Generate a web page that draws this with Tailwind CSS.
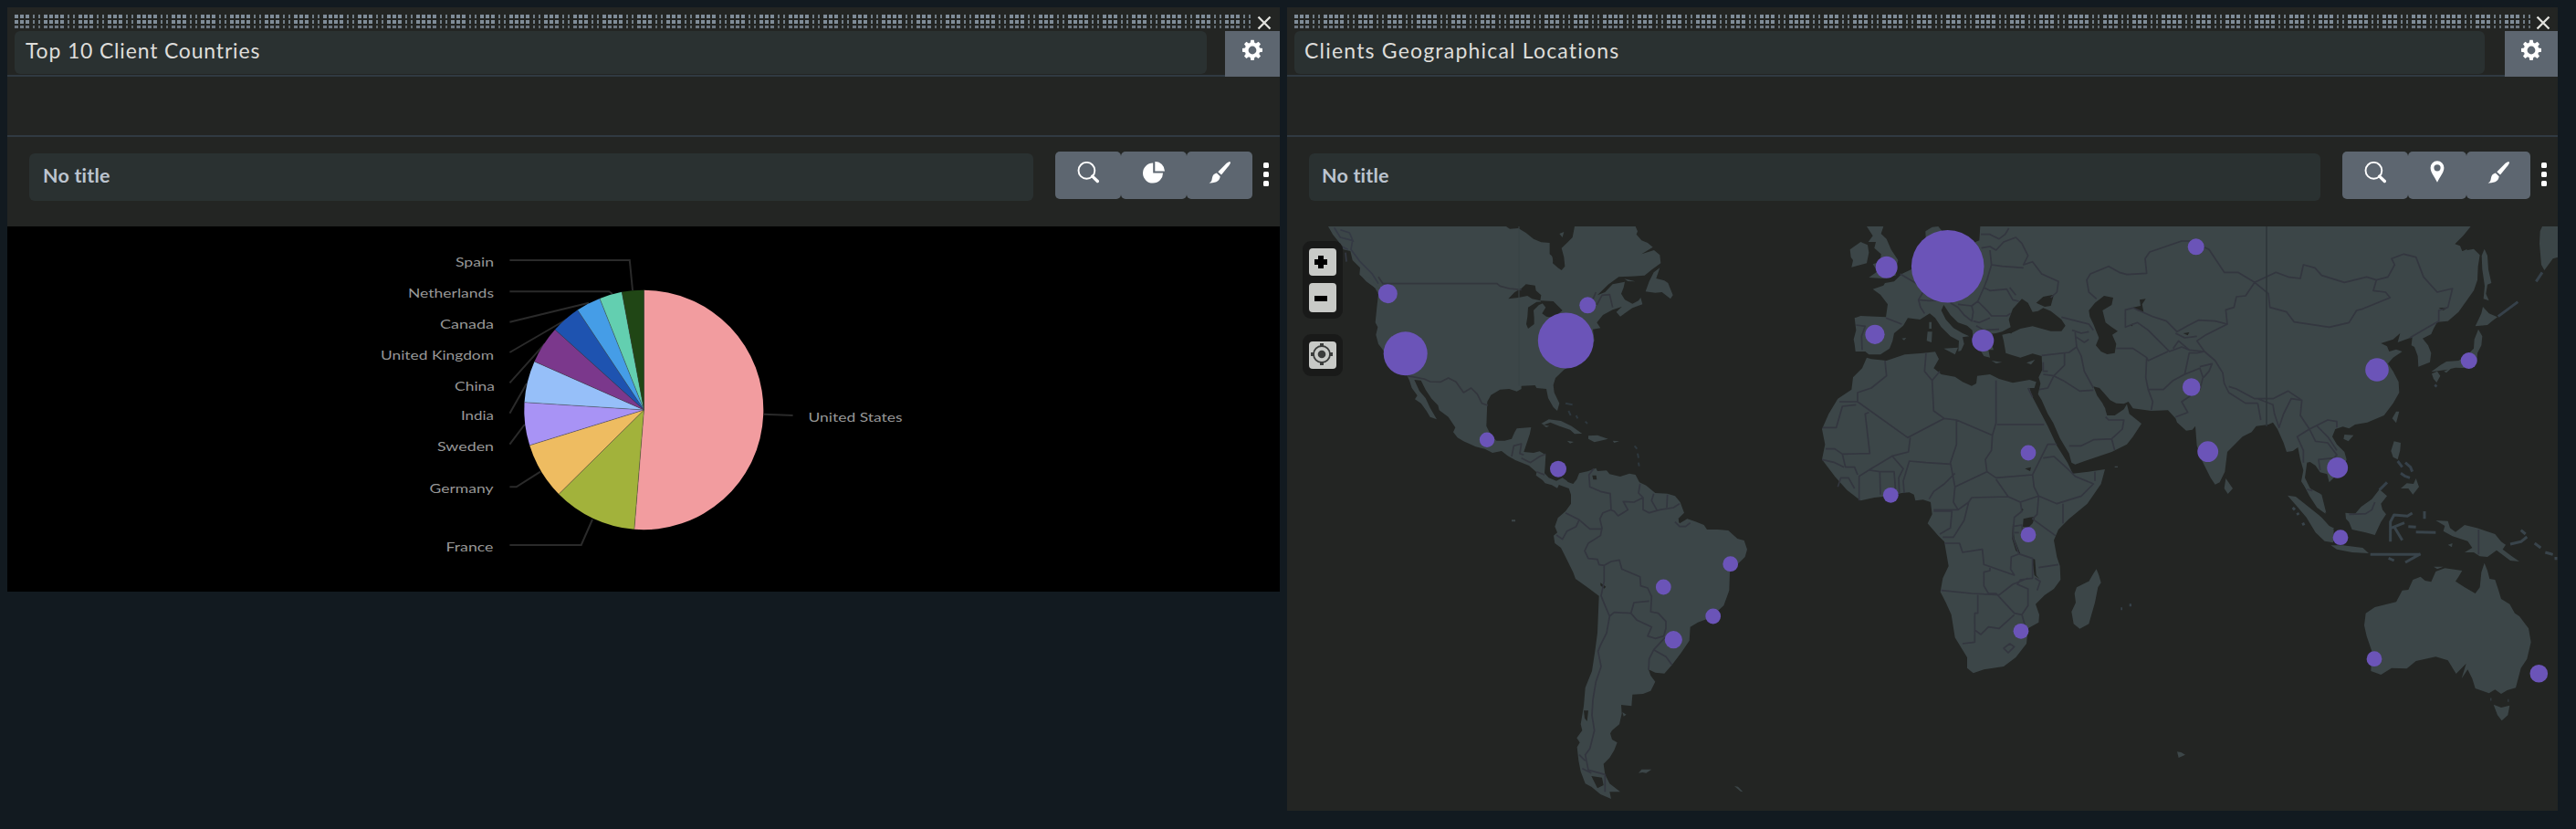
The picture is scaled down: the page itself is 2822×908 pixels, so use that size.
<!DOCTYPE html>
<html lang="en">
<head>
<meta charset="utf-8">
<title>Client dashboard</title>
<script src="https://cdn.jsdelivr.net/npm/@tailwindcss/browser@4"></script>
</head>
<body class="w-[2822px] h-[908px] overflow-hidden bg-[#121a20] font-['Lato','Open_Sans',sans-serif] flex items-start gap-2 pl-2 pt-2">

<svg class="absolute w-0 h-0" aria-hidden="true">
  <defs>
    <pattern id="grip" width="102" height="15" patternUnits="userSpaceOnUse" patternTransform="translate(32 0)">
      <g id="griprow" fill="#7f8c98">
        <path d="M0 0h4v4h-4zM6 0h4v4h-4zM12 0h4v4h-4zM18 0h4v4h-4zM38 0h4v4h-4zM44 0h4v4h-4zM50 0h4v4h-4zM70 0h4v4h-4zM76 0h4v4h-4zM82 0h4v4h-4z"/>
        <path d="M26 0h2v4h-2zM32 0h2v4h-2zM58 0h2v4h-2zM64 0h2v4h-2zM90 0h2v4h-2zM96 0h2v4h-2z" opacity=".85"/>
      </g>
      <use href="#griprow" y="6"/>
      <use href="#griprow" y="12" opacity=".8"/>
    </pattern>
    <symbol id="gear" viewBox="0 0 24 24">
      <path fill="#fff" fill-rule="evenodd" d="M10.3.8h3.4l.6 3 1.7.7 2.6-1.7 2.4 2.4-1.7 2.6.7 1.7 3 .6v3.6l-3 .6-.7 1.7 1.7 2.6-2.4 2.4-2.6-1.7-1.7.7-.6 3h-3.4l-.6-3-1.7-.7-2.6 1.7L3 18.6 4.700 16l-.7-1.700-3-.6v-3.600l3-.6.7-1.700L3 5.200l2.400-2.400L8 4.500l1.700-.7zM12 7.600a4.400 4.400 0 1 0 0 8.800 4.400 4.400 0 0 0 0-8.800z"/>
    </symbol>
    <symbol id="search" viewBox="0 0 24 24">
      <circle cx="10.400" cy="9.800" r="8.900" fill="none" stroke="#fff" stroke-width="1.900"/>
      <path d="M16.700 16.100 22.300 21.500" stroke="#fff" stroke-width="3.400" stroke-linecap="round"/>
    </symbol>
    <symbol id="pie" viewBox="0 0 24 24">
      <path fill="#fff" d="M11.200 1.600V12.400H22A11 11 0 1 1 11.200 1.600z"/>
      <path fill="#fff" d="M13.300 0A10.600 10.600 0 0 1 24 10.500H13.300z"/>
    </symbol>
    <symbol id="pin" viewBox="0 0 24 24">
      <path fill="#fff" fill-rule="evenodd" d="M12 .2a7.400 7.400 0 0 1 7.400 7.500c0 5.300-4.400 9.500-7.400 16.100C9 17.200 4.600 13 4.600 7.700A7.400 7.400 0 0 1 12 .2zM12 4.200a3.600 3.600 0 1 0 0 7.200 3.600 3.600 0 0 0 0-7.200z"/>
    </symbol>
    <symbol id="brush" viewBox="0 0 24 24">
      <path fill="#fff" d="M23.800.5c.5.800-.3 2.300-1.400 3.800L14 14.500l-3.700-3.300L19.700 1.800C21.300.5 23.100-.3 23.800.5z"/>
      <path fill="#fff" d="M8.900 12.500 12.700 16.200C12.300 20 9.600 23.600.6 23.400 4.200 21.600 3.200 19.800 4.300 16.400 5.200 14 7 12.900 8.900 12.500z"/>
    </symbol>
  </defs>
</svg>

<!-- Top 10 client countries -->
<section class="w-[1394px] h-[640px] bg-[#232523] flex flex-col">
  <div class="h-[26px] shrink-0 pl-2 pt-2 flex">
    <svg class="w-[1354px] h-[15px]"><rect width="1354" height="15" fill="url(#grip)"/></svg>
    <svg class="w-4 h-4 ml-[7px] mt-[1px]" viewBox="0 0 16 16"><path d="M1.500 1.500 14.500 14.500M14.500 1.500 1.500 14.500" stroke="#e2e2de" stroke-width="2.300"/></svg>
  </div>
  <div class="h-[50px] shrink-0 pl-2 flex justify-between bg-[linear-gradient(to_top,#303a42_2px,transparent_2px)]">
    <div class="w-[1306px] h-[47px] rounded-md bg-[#2a3131] pl-3 pt-[5px]"><h2 class="text-[23px] leading-[32px] tracking-[0.82px] text-[#deddda] whitespace-nowrap">Top 10 Client Countries</h2></div>
    <button class="w-[60px] h-[50px] bg-[#5d6670] flex justify-center pt-[9px]"><svg class="w-6 h-6"><use href="#gear"/></svg></button>
  </div>
  <div class="h-[66px] shrink-0 border-b-2 border-[#303a42]"></div>
  <div class="h-[98px] shrink-0 pl-6 flex">
    <div class="w-[1100px] h-[52px] mt-[18px] rounded-md bg-[#2a3131] pl-[15px] pt-[8px]"><p class="font-bold text-[21.500px] leading-[32px] tracking-[0.2px] text-[#bcc4cf] whitespace-nowrap">No title</p></div>
    <div class="ml-6 mt-4 h-[52px] flex">
      <button class="w-[72px] h-[52px] rounded-[5px] bg-[#5d6670] flex justify-center pt-[11px]"><svg class="w-6 h-6"><use href="#search"/></svg></button>
      <button class="w-[72px] h-[52px] rounded-[5px] bg-[#5d6670] flex justify-center pt-[11px]"><svg class="w-6 h-6"><use href="#pie"/></svg></button>
      <button class="w-[72px] h-[52px] rounded-[5px] bg-[#5d6670] flex justify-center pt-[11px]"><svg class="w-6 h-6"><use href="#brush"/></svg></button>
    </div>
    <div class="ml-3 mt-7 flex flex-col gap-1"><i class="size-[6px] rounded-[1.500px] bg-white"></i><i class="size-[6px] rounded-[1.500px] bg-white"></i><i class="size-[6px] rounded-[1.500px] bg-white"></i></div>
  </div>
  <svg class="w-[1394px] h-[400px] shrink-0 bg-black" viewBox="8 248 1394 400">
    <g fill="none" stroke="#2a2a2a" stroke-width="2">
      <path d="M558.400 285H689.800L693 318M558.400 319.300H667.300L671 322M558.400 352.700 645 331.700M558.400 386 620.400 350M558.400 419.300 596.700 376.700M558.400 452.700 577 420M558.400 486.700 574.700 465M558.400 533.300H565.700L592 516.700M558.400 597H636.700L649 569M837 453.700 868.600 455"/>
    </g>
    <g>
      <path fill="#f29c9f" d="M705.500 449V317.800A131.200 131.200 0 1 1 694.900 579.800z"/>
      <path fill="#a2b23b" d="M705.500 449 694.900 579.800A131.200 131.200 0 0 1 612.200 541.200z"/>
      <path fill="#eebc61" d="M705.500 449 612.200 541.200A131.200 131.200 0 0 1 580.200 487.800z"/>
      <path fill="#a893f5" d="M705.500 449 580.200 487.800A131.200 131.200 0 0 1 574.500 440.700z"/>
      <path fill="#96bff9" d="M705.500 449 574.500 440.700A131.200 131.200 0 0 1 585.500 396z"/>
      <path fill="#7b388c" d="M705.500 449 585.500 396A131.200 131.200 0 0 1 608 361z"/>
      <path fill="#1e53b0" d="M705.500 449 608 361A131.200 131.200 0 0 1 632.700 339.500z"/>
      <path fill="#459de7" d="M705.500 449 632.700 339.500A131.200 131.200 0 0 1 657 327z"/>
      <path fill="#63cfb0" d="M705.500 449 657 327A131.200 131.200 0 0 1 681.200 319.800z"/>
      <path fill="#204615" d="M705.500 449 681.200 319.800A131.200 131.200 0 0 1 705.500 317.800z"/>
    </g>
    <path fill="none" stroke="#444" stroke-opacity=".45" d="M705.500 449 694.900 579.800M705.500 449 612.200 541.200M705.500 449 580.200 487.800M705.500 449 574.500 440.700M705.500 449 585.500 396M705.500 449 608 361M705.500 449 632.700 339.500M705.500 449 657 327M705.500 449 681.200 319.800M705.500 449V317.800"/>
    <g fill="#979797" font-size="14" font-family="Lato, sans-serif">
      <text x="499" y="292" textLength="42" lengthAdjust="spacingAndGlyphs">Spain</text>
      <text x="447" y="326" textLength="94" lengthAdjust="spacingAndGlyphs">Netherlands</text>
      <text x="482" y="360" textLength="59" lengthAdjust="spacingAndGlyphs">Canada</text>
      <text x="417" y="394" textLength="124" lengthAdjust="spacingAndGlyphs">United Kingdom</text>
      <text x="498" y="428" textLength="44" lengthAdjust="spacingAndGlyphs">China</text>
      <text x="505" y="460" textLength="36" lengthAdjust="spacingAndGlyphs">India</text>
      <text x="479" y="494" textLength="62" lengthAdjust="spacingAndGlyphs">Sweden</text>
      <text x="470.500" y="540" textLength="70" lengthAdjust="spacingAndGlyphs">Germany</text>
      <text x="488.500" y="604" textLength="52" lengthAdjust="spacingAndGlyphs">France</text>
      <text x="885.500" y="462" textLength="103" lengthAdjust="spacingAndGlyphs">United States</text>
    </g>
  </svg>
</section>

<!-- Client locations -->
<section class="w-[1392px] h-[880px] bg-[#232523] flex flex-col">
  <div class="h-[26px] shrink-0 pl-2 pt-2 flex">
    <svg class="w-[1354px] h-[15px]"><rect width="1354" height="15" fill="url(#grip)"/></svg>
    <svg class="w-4 h-4 ml-[6px] mt-[1px]" viewBox="0 0 16 16"><path d="M1.500 1.500 14.500 14.500M14.500 1.500 1.500 14.500" stroke="#e2e2de" stroke-width="2.300"/></svg>
  </div>
  <div class="h-[50px] shrink-0 pl-2 flex justify-between bg-[linear-gradient(to_top,#303a42_2px,transparent_2px)]">
    <div class="w-[1304px] h-[47px] rounded-md bg-[#2a3131] pl-[11px] pt-[5px]"><h2 class="text-[23px] leading-[32px] tracking-[1.2px] text-[#deddda] whitespace-nowrap">Clients Geographical Locations</h2></div>
    <button class="w-[58px] h-[50px] bg-[#5d6670] flex justify-center pt-[9px]"><svg class="w-6 h-6"><use href="#gear"/></svg></button>
  </div>
  <div class="h-[66px] shrink-0 border-b-2 border-[#303a42]"></div>
  <div class="h-[98px] shrink-0 pl-6 flex">
    <div class="w-[1108px] h-[52px] mt-[18px] rounded-md bg-[#2a3131] pl-[14px] pt-[8px]"><p class="font-bold text-[21.500px] leading-[32px] tracking-[0.2px] text-[#bcc4cf] whitespace-nowrap">No title</p></div>
    <div class="ml-6 mt-4 h-[52px] flex">
      <button class="w-[72px] h-[52px] rounded-[5px] bg-[#5d6670] flex justify-center pt-[11px]"><svg class="w-6 h-6"><use href="#search"/></svg></button>
      <button class="w-[64px] h-[52px] rounded-[5px] bg-[#5d6670] flex justify-center pt-[10px]"><svg class="w-6 h-6"><use href="#pin"/></svg></button>
      <button class="w-[70px] h-[52px] rounded-[5px] bg-[#5d6670] flex justify-center pt-[11px]"><svg class="w-6 h-6"><use href="#brush"/></svg></button>
    </div>
    <div class="ml-3 mt-7 flex flex-col gap-1"><i class="size-[6px] rounded-[1.500px] bg-white"></i><i class="size-[6px] rounded-[1.500px] bg-white"></i><i class="size-[6px] rounded-[1.500px] bg-white"></i></div>
  </div>
  <div class="relative w-[1392px] h-[640px] shrink-0 overflow-hidden">
    <svg class="block w-[1392px] h-[640px]" viewBox="1410 248 1392 640">
      <!-- North and Central America -->
      <g transform="translate(1400 240) scale(.33333)" stroke-linejoin="round">
        <g fill="#3c4648">
          <path d="M165 24H750L762 32 790 30 815 45 840 65 865 76 893 78 893 115 905 125 903 145 920 160 932 168 943 155 940 125 932 95 950 78 968 60 975 24H1175L1182 40 1178 50 1195 70 1215 78 1232 92 1195 115 1236 102 1255 118 1258 145 1230 165 1205 185 1160 188 1120 190 1085 215 1050 250 1075 240 1100 214 1140 206 1136 225 1128 245 1140 265 1165 278 1185 268 1192 258 1198 280 1165 292 1125 320 1112 305 1130 288 1100 298 1068 315 1048 340 1060 358 1035 362 1040 400 1010 440 980 470 940 495 912 522 905 545 908 570 925 605 918 630 905 618 888 588 882 558 850 555 845 546 800 548 800 558 785 566 760 558 730 560 700 578 688 600 685 680 700 710 718 728 745 728 768 722 778 700 785 688 832 684 828 705 818 735 808 765 840 768 860 763 880 775 878 810 876 835 890 850 915 860 935 850 950 860 960 878 950 870 925 870 918 884 900 874 878 868 870 858 848 842 850 832 825 810 780 792 755 778 735 762 705 768 680 755 650 748 610 730 590 718 576 700 583 685 560 650 530 628 526 612 505 590 485 560 470 530 448 528 465 565 485 588 500 620 522 658 500 650 488 630 470 605 450 592 458 580 440 555 432 530 425 515 385 490 365 470 345 430 330 410 322 380 328 355 320 340 325 290 330 245 318 225 290 200 268 182 270 160 245 135 238 105 215 100 200 75 180 50z"/>
          <path d="M1255 160 1243 195 1270 202 1282 210 1298 250 1290 262 1262 240 1240 242 1208 238 1220 205 1235 175zM865 672 890 658 930 663 965 680 1000 705 975 706 960 692 925 680 895 668 875 676zM1020 712 1050 710 1085 722 1060 728 1040 733 1020 722zM950 728 972 732 960 737zM1100 728 1122 730 1105 735zM270 182 300 192 335 228 318 225 290 205zM1138 196 1175 205 1150 204zM925 48 940 42 935 60zM870 676 892 680 882 684z"/>
          <path d="M945 605 968 610M955 630 962 645M980 645 985 655M1010 665 1017 672M1172 745 1180 755M1182 770 1185 785M1185 800 1187 812" stroke="#2e383e" stroke-width="6" fill="none"/>
        </g>
        <path fill="#232523" d="M757 262 778 240 800 228 815 214 845 218 848 235 865 250 862 268 835 262 820 252 790 258zM822 290 850 272 885 270 858 282 840 300 842 325 842 345 822 360 816 345 820 320zM862 268 905 270 935 300 905 325 882 320 868 310 880 290zM885 355 940 335 905 358zM945 325 985 310 960 318zM900 118 918 128 905 138z"/>
        <path fill="none" stroke="#33363d" stroke-width="5" d="M330 190 345 212H720L730 220 760 228 800 232M425 515 480 525 500 534 535 535 560 522 585 535 610 570 635 555 655 575 670 605 690 612M1048 282 1065 250 1090 248 1100 290M768 780 775 745 800 738 795 770 808 775M800 785 830 800 860 780 880 772M1045 240 1030 275 1000 300M850 830 876 840"/>
        <path fill="none" stroke="#394245" stroke-width="3" d="M792 24V548"/>
        <path fill="none" stroke="#343944" stroke-width="5" d="M185 28 205 60 245 70 240 100 270 140 310 180 330 212M205 35 235 45 248 75M222 110 225 140M210 90 230 100"/>
      </g>
      <!-- South America -->
      <g transform="translate(1640 480) scale(.33333)" stroke-linejoin="round">
        <path fill="#3c4648" d="M195 150 215 135 235 145 250 150 262 135 270 115 300 108 325 98 330 108 360 106 370 118 405 126 435 116 455 120 468 145 490 155 520 180 560 182 585 190 602 210 615 245 598 262 600 280 625 265 650 273 680 285 690 300 725 300 760 303 790 330 812 336 822 365 815 390 790 415 765 440 763 500 745 550 700 590 660 605 635 620 632 665 605 705 575 745 550 773 520 770 498 760 505 780 520 800 505 830 480 840 445 842 442 880 408 876 410 905 402 940 378 960 372 970 378 990 395 1000 385 1025 370 1050 350 1070 355 1105 370 1135 405 1162 370 1162 375 1185 340 1170 310 1145 290 1135 275 1095 268 1060 263 1015 272 1000 262 985 280 960 275 940 285 880 290 820 312 765 322 700 330 640 335 518 300 492 258 462 250 440 230 400 210 360 190 345 186 320 198 310 190 290 200 262 225 240 243 215 243 185 236 165z"/>
        <path fill="#3c4648" d="M465 1100 475 1088 508 1088 490 1100 478 1098zM780 1143 792 1145 808 1162 800 1160zM412 900 425 908 416 914zM48 268H60V274H48z"/>
        <path fill="#232523" d="M313 122 326 122 328 136 316 136zM340 475 358 488 352 494 340 484zM285 895 300 895 296 930 288 920zM596 262 606 270 598 278zM310 1110 345 1115 350 1140 330 1150z"/>
        <path fill="none" stroke="#33363f" stroke-width="5" d="M318 100 302 120 305 160 340 175 372 182 375 235 348 245 338 265 345 295 340 320 300 345 288 370 300 395 330 398 335 415 352 418M372 235 385 240 398 255 430 235 415 208 450 210 480 195 465 180 470 150M480 195 480 235 500 245 535 235 580 228 600 215M515 182 508 205 525 235M560 185 558 228M225 245 270 268 305 298 345 298M270 268 260 290 230 305 215 332 195 318M352 418 375 405 402 400 410 430 470 455 472 485 495 492 508 520 505 570 530 575 555 602 555 625 548 650 520 658 495 650 508 620 460 598 440 575 450 540 500 535M352 418 352 470 342 518 355 550 370 585 385 572 440 575M370 585 360 640 340 680 332 700 342 750 325 800 315 860 312 910 320 960 305 1020 290 1040 300 1090 355 1105M552 655 515 695 500 725 498 762M515 695 555 718 575 745M560 650 570 640M585 275 600 290 620 290 635 278M355 1105V1162M270 1040 290 1060M280 1085 310 1100"/>
      </g>
      <!-- Europe, Africa and Asia -->
      <g transform="translate(1960 240) scale(.33333)" stroke-linejoin="round">
        <g fill="#3c4648">
          <path d="M628 24H2240L2215 55 2188 82 2205 88 2212 105 2250 98 2270 118 2264 155 2262 200 2250 235 2225 270 2200 305 2165 335 2130 338 2118 360 2110 378 2082 392 2100 415 2110 440 2106 470 2068 485 2066 450 2055 420 2045 415 2048 388 2035 392 2000 405 2008 375 1985 395 1945 408 1965 418 1972 435 1995 428 2015 435 1985 455 1968 475 1985 500 2003 535 2005 570 1985 605 1955 645 1900 668 1860 675 1840 688 1820 682 1795 690 1785 715 1800 740 1825 765 1832 790 1822 820 1790 850 1775 865 1768 838 1745 832 1730 810 1712 798 1702 800 1695 850 1715 890 1750 905 1765 965 1740 950 1715 910 1683 862 1690 825 1680 790 1672 750 1655 762 1635 765 1625 735 1605 690 1590 668 1575 675 1535 680 1520 700 1490 715 1440 765 1432 830 1415 865 1400 872 1385 850 1355 790 1340 745 1335 680 1325 692 1305 695 1275 668 1270 655 1245 628 1190 630 1130 622 1115 600 1100 607 1075 605 1055 595 1038 575 1020 555 1000 550 1012 580 1030 605 1042 630 1035 612 1045 645 1070 645 1100 625 1110 608 1118 640 1158 672 1130 715 1110 740 1060 765 1000 785 940 806 928 800 920 770 890 720 868 670 850 640 830 595 818 575 826 540 820 520 832 495 830 450 800 442 760 455 735 448 712 440 705 400 700 380 735 372 760 360 800 352 860 368 895 368 908 350 895 330 860 302 835 292 818 302 800 305 785 275 765 262 735 295 722 330 728 355 700 370 680 375 655 378 662 400 672 430 655 430 660 455 640 450 625 425 605 400 602 365 585 350 555 340 530 315 508 282 500 300 515 330 540 358 570 375 592 385 570 388 575 410 565 432 556 435 558 400 530 385 500 355 480 325 462 310 430 330 390 325 375 350 345 375 340 400 330 425 300 445 262 445 250 435 218 435 215 410 212 395 220 365 215 325 235 318 318 322 324 280 300 248 275 230 310 218 315 210 345 205 370 180 402 165 420 130 450 90 448 40 470 26 490 24 520 60 600 80 625 70z"/>
          <path d="M255 24H310L302 48 320 65 335 100 358 135 352 160 350 185 310 195 262 192 290 172 275 148 300 140 302 115 280 95 285 75 260 75 275 55zM200 100 235 75 258 85 262 110 255 145 205 158 210 135 203 125zM455 370 470 370 468 405 452 400zM460 338H468V360H460zM508 425 555 422 545 445zM665 465 700 470 680 474zM780 472 808 462 795 478zM370 392 385 390 378 398z"/>
          <path d="M255 455 270 460 320 465 380 445 440 440 480 436 492 460 475 490 500 510 545 518 570 535 600 548 615 540 618 515 660 510 690 525 735 538 790 528 812 535 806 555 790 555 800 585 850 680 880 745 915 800 932 836 970 832 1038 822 1025 870 980 935 920 985 885 1020 870 1055 880 1110 890 1140 892 1185 870 1215 840 1235 810 1265 822 1300 820 1325 785 1345 780 1395 745 1440 705 1470 640 1480 605 1492 585 1475 585 1440 545 1375 533 1300 515 1260 497 1225 505 1180 524 1140 510 1060 490 1040 455 1000 470 970 465 930 440 922 415 925 410 905 395 898 370 900 330 910 280 915 235 925 190 890 150 845 108 790 118 740 108 690 130 640 160 590 205 560 210 520 240 490z"/>
          <path d="M1010 1150 1018 1170 1025 1195 1015 1210 1005 1260 985 1330 955 1346 935 1330 928 1290 942 1260 938 1230 945 1210 985 1190 1000 1165zM2280 288 2300 310 2328 322 2310 335 2295 348 2255 352 2268 325 2275 310zM2265 362 2278 385 2275 415 2262 440 2260 470 2235 490 2190 488 2160 495 2110 502 2140 480 2160 468 2200 465 2225 450 2250 425 2252 395zM2112 508 2130 500 2140 515 2128 537 2118 525zM2152 500 2178 488 2160 505zM2285 98 2295 120 2298 165 2308 210 2295 215 2290 245 2300 268 2282 262 2286 220 2278 165 2276 120zM2475 24H2527V125L2510 130 2482 168 2472 150 2466 80 2468 40zM1995 632 2005 632 1995 670 1982 655zM1825 708 1855 710 1838 730 1822 722zM1435 852 1458 885 1442 903 1430 885zM1988 730 2010 735 2008 760 2000 790 1985 782 1978 762zM2010 885 2030 868 2052 870 2060 852 2070 880 2050 905 2035 885zM2215 105 2228 98 2226 110zM1070 812H1080V816H1070z"/>
          <path d="M1965 865 1940 890M2000 795 2015 815M2025 800 2042 815 2048 830M2010 835 2025 845 2040 850M2330 320 2395 272M2455 205 2475 175M2128 545 2122 550M1090 1280H1095M1118 1268H1125" fill="none" stroke="#36414a" stroke-width="9"/>
        </g>
        <path fill="#232523" d="M812 275 835 255 870 248 860 285 840 288zM985 300 1005 275 1035 252 1065 258 1060 282 1030 300 1040 340 1060 355 1080 368 1062 380 1075 410 1070 440 1045 444 1025 435 1008 415 1018 390 1000 345 988 320zM1130 290 1155 285 1152 265 1172 262 1160 280 1165 305 1148 302zM770 985 790 980 808 978 800 1000 785 1015 768 1010zM735 1000 740 1050 760 1100 745 1090 733 1050zM798 1115 808 1118 812 1170 822 1182 806 1170zM765 950 770 955 758 968zM1120 350 1130 342 1128 352zM2135 292 2165 290 2150 300zM775 820 795 815 792 828zM710 372 735 370 730 376zM1295 375 1315 372 1310 382z"/>
        <g fill="none" stroke="#33363f" stroke-width="5">
          <path d="M630 50 660 50 690 65 710 50 722 30M632 95 660 90 680 102 705 75 745 60 765 80 785 120 770 150 800 140 830 180 885 205 880 240 860 258M660 102 665 150 700 155 770 160M665 150 650 200 640 225 660 235 715 230 735 265 755 270M725 225 745 250M640 225 620 270 655 305 665 318 715 318 728 310M555 280 600 285 620 270M555 290 575 315 600 335 605 305 600 285M605 335 625 340 660 325M615 350 640 365 690 362M530 275 555 290M440 240 425 265 432 290 445 310M425 265 460 268 520 265M318 325 370 345M220 348 250 352 238 385 240 430M365 180 390 195 425 215"/>
          <path d="M895 322 945 335 985 345 1000 365M930 365 960 375 985 370M940 372 945 420 920 438 830 448M945 420 960 450 970 500 1000 555M940 385 970 405 985 395M905 440 905 480 870 515 835 510M870 515 900 530 955 565 1000 562M870 515 850 555 822 560M835 470V500L850 500"/>
          <path d="M1010 262 985 240 978 200 990 180 1050 155 1085 175 1110 182 1175 178 1170 130 1185 108 1290 72 1320 72 1380 100 1430 175 1475 175 1530 208 1575 245 1580 290 1635 305 1660 338 1775 355 1840 340 1865 300 1885 295 1975 258 1960 240 1920 235 1930 200 1898 190 1825 208 1750 185 1728 160 1690 150 1680 195 1640 190 1600 175 1530 208 1500 252 1470 255 1462 290 1435 298 1440 345 1400 335 1345 332 1310 350 1275 370 1240 335 1195 320 1130 292 1105 298V355L1145 340 1180 365 1250 435 1290 420 1315 430M1930 200 1968 190 1990 150 1980 130 2020 115 2060 125 2085 190 2130 240 2180 228 2165 290 2135 300 2135 335 2095 358 2040 390"/>
          <path d="M1440 345 1370 380 1340 400 1365 435 1315 430 1280 400 1262 425M1340 385 1300 390 1270 375M1075 425 1130 425 1175 455 1180 465 1245 435M1175 455 1172 520 1180 560 1195 600 1190 628M1180 560 1230 560 1262 530 1300 510 1315 440 1340 440 1365 435 1400 465 1425 505 1430 540 1445 570 1500 605 1540 605M1445 550 1470 558 1530 590 1590 590 1640 565 1685 595 1680 645 1710 690 1770 660 1800 665 1800 685M1350 485 1390 475 1380 500 1362 520M1300 510 1350 490 1360 520 1350 560 1290 600 1310 635 1270 650M1540 605 1550 660M1540 590 1590 610 1595 640 1610 685 1625 640 1650 590 1685 595M1710 690 1670 715 1690 760 1690 800M1710 690 1730 730 1770 735 1800 775 1790 785 1740 790 1745 825M1735 680 1770 715 1800 760"/>
          <path d="M920 745 960 745 1000 725 1060 722 1095 690 1100 660 1050 660 1040 650M1060 722 1070 760M785 555 800 585"/>
        </g>
        <path fill="none" stroke="#2f363a" stroke-width="5" d="M1569 24V680"/>
        <path fill="none" stroke="#33363f" stroke-width="5" d="M450 440 445 500 470 530 475 630 510 655 390 718 225 600 225 570 270 555 320 515 315 465M495 500 470 530M110 685 155 685 175 615 220 610M225 600 165 600M262 635 250 640 265 770 175 772 150 755 120 755M510 655 550 660 668 710 680 670 680 530M683 675H838M668 710 665 760 645 790 650 830 545 880 530 800 550 740 550 660M398 718 392 765 340 778 270 820 230 845 230 925M175 772 185 815 215 815 225 840M108 790 150 800 180 815M160 880 170 850 195 850 215 885M265 825 298 830 300 905M300 830 345 830 350 895M340 780 375 820 360 850 362 900M378 900 375 860 395 795 450 800 530 805M545 835 510 870 475 895 460 920M545 880 540 930 555 955 475 955M555 955 590 930 575 990 540 1045 505 1045M475 960 535 960 530 1015 495 1035M590 930 600 915 720 912 760 930 765 960 740 980 735 1045 755 1100 730 1110 728 1150 740 1170 640 1135 635 1085 570 1095 560 1065 510 1065M650 830 680 850 800 840 830 780 850 740 880 740M800 840 805 880 820 910 760 930M720 912 680 855M820 910 880 935 960 910 1000 870 940 845 915 820 870 780 835 785M900 935V1000M1005 830 1005 860M820 910 815 970 800 985 875 1040M755 1100 800 1115 800 1180 760 1185 750 1200 785 1215 785 1270 765 1300 740 1295 680 1230 655 1230 640 1205 640 1160 660 1155 660 1140M820 1145 885 1135M500 1220 600 1230 690 1235 735 1200 785 1180M620 1235V1295H610V1390L570 1395M610 1350 630 1365 655 1340 690 1345 740 1300M765 1300 775 1335M705 1410 725 1395 740 1405 720 1425zM735 1010 765 1005 768 1035M740 1030 755 1030M808 1180 825 1190 815 1220"/>
      </g>
      <!-- South-east Asia and Oceania -->
      <g transform="translate(2380 500) scale(.33333)" stroke-linejoin="round">
        <g fill="#3c4648">
          <path d="M1025 350 1035 375 1042 402 1060 405 1070 435 1080 468 1108 485 1125 515 1140 525 1170 565 1178 610 1165 665 1145 695 1128 760 1100 768 1080 780 1060 766 1040 778 995 762 985 730 970 700 950 730 965 680 932 714 905 670 865 658 800 672 770 697 720 695 685 717 652 705 655 640 638 590 630 555 635 515 665 495 735 478 755 440 775 438 790 405 815 395 830 408 850 412 865 378 895 367 952 375 940 395 930 410 960 430 995 450 1010 430 1015 380zM1055 815 1080 825 1108 818 1102 850 1082 868 1068 850zM378 128 405 132 440 160 490 200 515 228 530 240 528 283 500 278 470 250 440 200 410 165zM425 80 440 98 485 122 503 188 475 168 450 130zM568 185 600 188 620 165 655 140 680 108 705 130 685 155 690 175 702 190 685 215 665 258 635 250 590 240 580 215 570 205zM520 292 560 292 625 300 645 318 590 315 540 305zM865 210 905 212 912 235 930 248 960 225 1000 235 1060 255 1080 280 1095 290 1085 305 1115 328 1140 345 1110 342 1065 308 1035 330 1010 328 990 315 960 315 985 300 970 278 920 262 890 245 895 228zM15 970 28 972 42 980 20 990zM858 362 890 362 870 370zM515 228 532 236 522 240zM905 290 920 285 918 298z"/>
          <path d="M788 186 772 196 728 192 716 215 716 280M718 235 762 218M728 230 755 275M650 322H815M710 334 728 342M765 348 815 320M828 180V205M800 248 865 250M775 230 800 232M1110 288 1145 280 1165 264M1190 285 1210 300M1225 315 1250 322M395 168 402 175M410 185 414 192M428 218 432 226M1145 242 1160 255M1045 798H1048M1102 802H1105M1260 330V340" fill="none" stroke="#39444b" stroke-width="9"/>
        </g>
        <path fill="none" stroke="#33363f" stroke-width="5" d="M1006 240V322M580 190 635 188 655 175 665 150M442 108 460 112"/>
      </g>
      <!-- Client markers -->
      <g fill="#6b54b8">
        <circle cx="1520.300" cy="321.700" r="10.500"/><circle cx="1539.700" cy="387.300" r="24"/><circle cx="1715.300" cy="373" r="30.500"/>
        <circle cx="1739.300" cy="334.300" r="9"/><circle cx="1629" cy="481.700" r="8.200"/><circle cx="1707" cy="513.700" r="9"/>
        <circle cx="1895.700" cy="617.700" r="8.400"/><circle cx="1822.300" cy="643" r="8.400"/><circle cx="1876.700" cy="675" r="8.400"/><circle cx="1833.300" cy="700.700" r="9.600"/>
        <circle cx="2133.700" cy="291.700" r="39.800"/><circle cx="2066.700" cy="292.700" r="12"/><circle cx="2054" cy="366.300" r="10.600"/><circle cx="2172.300" cy="373" r="12"/>
        <circle cx="2222" cy="496" r="8.400"/><circle cx="2071.300" cy="542.300" r="8.400"/><circle cx="2222" cy="585.700" r="8.400"/><circle cx="2214" cy="691.300" r="8.400"/>
        <circle cx="2405.700" cy="270.300" r="9"/><circle cx="2400.700" cy="424" r="9.800"/><circle cx="2418.700" cy="494.700" r="11.400"/><circle cx="2560.700" cy="512.300" r="11.400"/>
        <circle cx="2604" cy="405" r="12.800"/><circle cx="2704.700" cy="395" r="9"/><circle cx="2564" cy="588.700" r="8.400"/><circle cx="2601" cy="721.700" r="8.400"/><circle cx="2781.300" cy="737.700" r="9.800"/>
      </g>
    </svg>
    <div class="absolute left-[17px] top-4 w-11 h-[85px] rounded-[9px] bg-[#191a19] px-[7px] pt-2 flex flex-col gap-2">
      <button class="w-[30px] h-[30px] rounded-[4px] bg-[#c8cac7]"><svg class="w-[30px] h-[30px]" viewBox="0 0 30 30"><path d="M6 15H20M13 8V22" stroke="#000" stroke-width="6"/></svg></button>
      <button class="w-[30px] h-8 rounded-[4px] bg-[#c8cac7]"><svg class="w-[30px] h-8" viewBox="0 0 30 32"><path d="M6 17H20" stroke="#000" stroke-width="6"/></svg></button>
    </div>
    <div class="absolute left-[17px] top-[118px] w-11 h-[46px] rounded-[9px] bg-[#191a19] px-[7px] pt-2">
      <button class="block w-[30px] h-[30px] rounded-[4px] bg-[#c8cac7]"><svg class="w-[30px] h-[30px]" viewBox="0 0 30 30"><circle cx="14" cy="14" r="4.300" fill="#3a3c3b"/><circle cx="14" cy="14" r="9" fill="none" stroke="#3a3c3b" stroke-width="1.800"/><path d="M14 2V6M14 22V26M2 14H6M22 14H26" stroke="#3a3c3b" stroke-width="4"/></svg></button>
    </div>
  </div>
</section>
</body>
</html>
